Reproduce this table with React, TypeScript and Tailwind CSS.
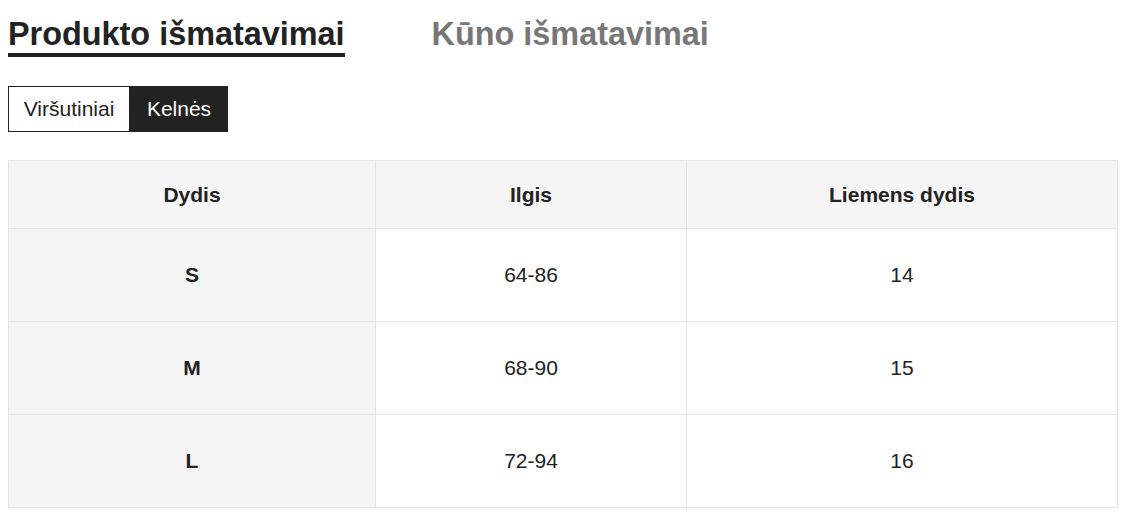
import React from "react";

const rows = [
  { size: "S", len: "64-86", waist: "14" },
  { size: "M", len: "68-90", waist: "15" },
  { size: "L", len: "72-94", waist: "16" },
];

export default function App() {
  return (
    <div
      className="w-[1126px] h-[518px] bg-white text-[#222] overflow-hidden"
      style={{ fontFamily: '"Liberation Sans", Arial, sans-serif' }}
    >
      <div className="flex pl-[8px] pt-[16px] gap-[87px]">
        <div className="text-[32.4px] leading-[37px] font-bold border-b-4 border-[#222] text-[#222]">
          Produkto išmatavimai
        </div>
        <div className="text-[32.4px] leading-[37px] font-bold text-[#777] border-b-4 border-transparent">
          Kūno išmatavimai
        </div>
      </div>

      <div className="flex ml-[8px] mt-[29px] h-[46px] w-[220px]">
        <div className="flex items-center justify-center w-[122px] border border-[#222] text-[21px] text-[#222]">
          Viršutiniai
        </div>
        <div className="flex items-center justify-center w-[98px] bg-[#222] text-white text-[21px]">
          Kelnės
        </div>
      </div>

      <div className="ml-[8px] mt-[28px] w-[1110px] grid grid-cols-[367px_311px_431px] border-l border-t border-[#e5e5e5] text-[21px]">
        <div className="h-[68px] flex items-center justify-center bg-[#f5f5f5] border-r border-b border-[#e5e5e5] font-bold">
          Dydis
        </div>
        <div className="h-[68px] flex items-center justify-center bg-[#f5f5f5] border-r border-b border-[#e5e5e5] font-bold">
          Ilgis
        </div>
        <div className="h-[68px] flex items-center justify-center bg-[#f5f5f5] border-r border-b border-[#e5e5e5] font-bold">
          Liemens dydis
        </div>
        {rows.map((r) => (
          <React.Fragment key={r.size}>
            <div className="h-[93px] flex items-center justify-center bg-[#f5f5f5] border-r border-b border-[#e5e5e5] font-bold">
              {r.size}
            </div>
            <div className="h-[93px] flex items-center justify-center bg-white border-r border-b border-[#e5e5e5]">
              {r.len}
            </div>
            <div className="h-[93px] flex items-center justify-center bg-white border-r border-b border-[#e5e5e5]">
              {r.waist}
            </div>
          </React.Fragment>
        ))}
      </div>
    </div>
  );
}
